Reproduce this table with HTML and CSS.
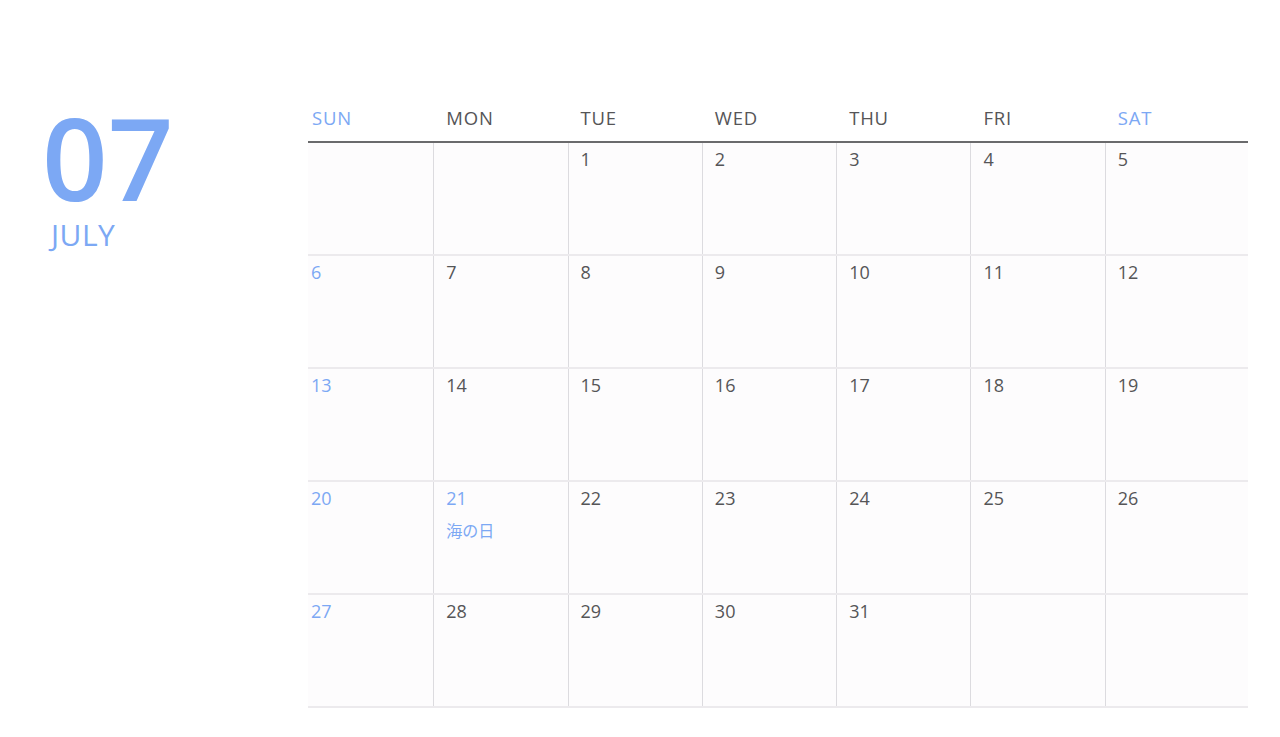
FILE: index.html
```html
<!DOCTYPE html>
<html lang="ja">
<head>
<meta charset="utf-8">
<title>July</title>
<link rel="stylesheet" href="styles.css">
</head>
<body>
<div class="page">
  <aside class="side">
    <div class="num">07</div>
    <div class="mon">JULY</div>
  </aside>
  <main class="cal">
    <div class="head">
      <div class="hcells">
        <div class="hd blue">SUN</div><div class="hd">MON</div><div class="hd">TUE</div><div class="hd">WED</div><div class="hd">THU</div><div class="hd">FRI</div><div class="hd blue">SAT</div>
      </div>
    </div>
    <div class="row"><div class="cells">
      <div class="c"></div><div class="c"></div><div class="c"><span class="d">1</span></div><div class="c"><span class="d">2</span></div><div class="c"><span class="d">3</span></div><div class="c"><span class="d">4</span></div><div class="c"><span class="d">5</span></div>
    </div></div>
    <div class="row"><div class="cells">
      <div class="c sun"><span class="d">6</span></div><div class="c"><span class="d">7</span></div><div class="c"><span class="d">8</span></div><div class="c"><span class="d">9</span></div><div class="c"><span class="d">10</span></div><div class="c"><span class="d">11</span></div><div class="c"><span class="d">12</span></div>
    </div></div>
    <div class="row"><div class="cells">
      <div class="c sun"><span class="d">13</span></div><div class="c"><span class="d">14</span></div><div class="c"><span class="d">15</span></div><div class="c"><span class="d">16</span></div><div class="c"><span class="d">17</span></div><div class="c"><span class="d">18</span></div><div class="c"><span class="d">19</span></div>
    </div></div>
    <div class="row"><div class="cells">
      <div class="c sun"><span class="d">20</span></div><div class="c sun"><span class="d">21</span><span class="hol">海の日</span></div><div class="c"><span class="d">22</span></div><div class="c"><span class="d">23</span></div><div class="c"><span class="d">24</span></div><div class="c"><span class="d">25</span></div><div class="c"><span class="d">26</span></div>
    </div></div>
    <div class="row"><div class="cells">
      <div class="c sun"><span class="d">27</span></div><div class="c"><span class="d">28</span></div><div class="c"><span class="d">29</span></div><div class="c"><span class="d">30</span></div><div class="c"><span class="d">31</span></div><div class="c"></div><div class="c"></div>
    </div></div>
  </main>
</div>
</body>
</html>
```
FILE: styles.css
```css
* { box-sizing: border-box; }
html, body { margin: 0; padding: 0; background: #ffffff; }
body {
  font-family: "Open Sans", "Noto Sans CJK JP", sans-serif;
  color: #555557;
  width: 1280px;
  height: 737px;
  overflow: hidden;
}
.page {
  display: flex;
  align-items: flex-start;
}
.side {
  width: 299px;
  padding-top: 107px;
  padding-left: 42px;
  color: #7ca8f4;
}
.num {
  font-size: 115px;
  font-weight: 600;
  line-height: 100px;
  letter-spacing: 0px;
}
.mon {
  font-size: 30px;
  line-height: 34px;
  margin-top: 11px;
  padding-left: 9px;
  letter-spacing: 0.5px;
}
.cal {
  width: 949px;
  padding-top: 100px;
}
.head, .row {
  margin-left: 9px;
  width: 940px;
}
.head {
  border-bottom: 2px solid #6a6a6c;
}
.hcells, .cells {
  display: grid;
  grid-template-columns: repeat(7, 1fr);
  margin-left: -9px;
  width: 940px;
}
.hd {
  padding-left: 13px;
  height: 41px;
  font-size: 18.5px;
  line-height: 36px;
  letter-spacing: 0.8px;
  color: #555557;
}
.hd.blue { color: #7ca8f4; }
.row {
  border-bottom: 2px solid #eceaed;
  background: #fdfcfd;
}
.c {
  height: 111px;
  padding: 4px 0 0 12px;
  display: flex;
  flex-direction: column;
  align-items: flex-start;
}
.c + .c {
  border-left: 1px solid #dcdbdf;
}
.d {
  font-size: 18px;
  line-height: 24px;
}
.sun .d { color: #7ca8f4; }
.hol {
  margin-top: 10px;
  font-size: 16px;
  line-height: 22px;
  color: #7ca8f4;
}
```
